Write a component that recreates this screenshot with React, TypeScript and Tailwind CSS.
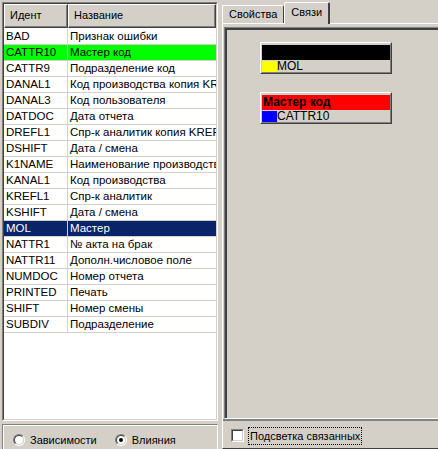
import React from 'react';

const rows: [string, string][] = [
  ['BAD', 'Признак ошибки'],
  ['CATTR10', 'Мастер код'],
  ['CATTR9', 'Подразделение код'],
  ['DANAL1', 'Код производства копия KREF'],
  ['DANAL3', 'Код пользователя'],
  ['DATDOC', 'Дата отчета'],
  ['DREFL1', 'Спр-к аналитик копия KREFL1'],
  ['DSHIFT', 'Дата / смена'],
  ['K1NAME', 'Наименование производства'],
  ['KANAL1', 'Код производства'],
  ['KREFL1', 'Спр-к аналитик'],
  ['KSHIFT', 'Дата / смена'],
  ['MOL', 'Мастер'],
  ['NATTR1', '№ акта на брак'],
  ['NATTR11', 'Дополн.числовое поле'],
  ['NUMDOC', 'Номер отчета'],
  ['PRINTED', 'Печать'],
  ['SHIFT', 'Номер смены'],
  ['SUBDIV', 'Подразделение'],
];

const rowStyle = (id: string) => {
  if (id === 'CATTR10') return 'bg-[#00ff00] text-black';
  if (id === 'MOL') return 'bg-[#0a246a] text-white';
  return 'bg-white text-black';
};

const Radio: React.FC<{ checked?: boolean; label: string }> = ({ checked, label }) => (
  <div className="flex items-center gap-[5px]">
    <span className="w-[12px] h-[12px] rounded-full border border-t-[#808080] border-l-[#808080] border-b-white border-r-white flex">
      <span className="flex-1 rounded-full border border-t-[#404040] border-l-[#404040] border-b-[#d4d0c8] border-r-[#d4d0c8] bg-white flex items-center justify-center">
        {checked && <span className="w-[4px] h-[4px] rounded-full bg-black" />}
      </span>
    </span>
    <span>{label}</span>
  </div>
);

const Node: React.FC<{ left: number; top: number; title: string; titleBg: string; sq: string; name: string }> = ({
  title,
  titleBg,
  sq,
  name,
  left,
  top,
}) => (
  <div
    className="absolute w-[132px] border border-t-white border-l-white border-b-[#404040] border-r-[#404040]"
    style={{ left, top }}
  >
    <div className="border border-t-[#d4d0c8] border-l-[#d4d0c8] border-b-[#808080] border-r-[#808080] bg-[#d4d0c8] pt-px">
      <div className={`h-[15px] ${titleBg} font-bold text-[12px] leading-[15px] pl-px`}>{title}</div>
      <div className="h-[12px] flex items-center">
        <span className={`w-[15px] h-[11px] ${sq}`} />
        <span className="leading-[12px] text-[12px]">{name}</span>
      </div>
    </div>
  </div>
);

export default function App() {
  return (
    <div className="w-[438px] h-[449px] bg-[#d4d0c8] flex overflow-hidden font-['Liberation_Sans',Arial,sans-serif] text-[11px] text-black">
      {/* левая панель */}
      <div className="w-[219px] shrink-0 flex flex-col pt-[2px] pl-[2px] pr-[1px]">
        <div className="h-[419px] border border-t-[#808080] border-l-[#808080] border-b-white border-r-white">
          <div className="h-full flex flex-col border border-t-[#404040] border-l-[#404040] border-b-[#d4d0c8] border-r-[#d4d0c8] bg-white">
            <div className="h-[24px] flex shrink-0 bg-[#d4d0c8]">
              <div className="w-[64px] border-t border-l border-white border-b border-r border-b-[#404040] border-r-[#404040] flex">
                <div className="flex-1 border-b border-r border-[#808080] pl-[5px] flex items-center">Идент</div>
              </div>
              <div className="flex-1 border-t border-l border-white border-b border-r border-b-[#404040] border-r-[#404040] flex">
                <div className="flex-1 border-b border-r border-[#808080] pl-[5px] flex items-center">Название</div>
              </div>
            </div>
            <div className="flex-1 overflow-hidden pt-px text-[11.5px]">
              {rows.map(([id, name]) => (
                <div key={id} className="flex h-[16px] border-b border-[#d4d0c8]">
                  <div className={`w-[64px] border-r border-[#d4d0c8] pl-[2px] leading-[15px] whitespace-nowrap overflow-hidden ${rowStyle(id)}`}>
                    {id}
                  </div>
                  <div className={`flex-1 pl-[2px] leading-[15px] whitespace-nowrap overflow-hidden ${rowStyle(id)}`}>
                    {name}
                  </div>
                </div>
              ))}
            </div>
          </div>
        </div>
        <div className="flex-1 mt-[3px] border-t border-l border-[#808080] border-r border-r-white flex">
          <div className="flex-1 border-t border-l border-white flex items-center gap-[18px] pl-[9px] pt-[5px]">
            <Radio label="Зависимости" />
            <Radio checked label="Влияния" />
          </div>
        </div>
      </div>

      {/* правая панель */}
      <div className="flex-1 flex flex-col pt-[2px] pl-[3px] min-w-0">
        <div className="h-[21px] flex items-end shrink-0">
          <div className="h-[18px] px-[6px] border-t border-l border-white border-r border-r-[#404040] rounded-t-[2px] flex items-center">
            Свойства
          </div>
          <div className="h-[22px] -mb-px relative z-10 px-[6px] bg-[#d4d0c8] border-t border-l border-white border-r-2 border-r-[#404040] rounded-t-[2px] flex items-center pb-[2px]">
            Связи
          </div>
        </div>
        <div className="flex-1 w-[240px] border-t border-l border-white border-b border-b-[#404040] flex flex-col">
          <div className="flex-1 ml-px mt-[3px] border-t border-l border-[#808080] border-b border-b-white flex">
            <div className="flex-1 relative border-t-2 border-l-2 border-[#404040]">
              <Node left={33} top={12} title="" titleBg="bg-black" sq="bg-[#ffff00]" name="MOL" />
              <Node left={33} top={62} title="Мастер код" titleBg="bg-[#ff0000]" sq="bg-[#0000ff]" name="CATTR10" />
            </div>
          </div>
          <div className="h-[29px] border-t-2 border-[#808080] flex items-center pl-[8px] pt-[2px] gap-[4px]">
            <span className="w-[13px] h-[13px] border border-t-[#808080] border-l-[#808080] border-b-white border-r-white flex">
              <span className="flex-1 bg-white border border-t-[#404040] border-l-[#404040] border-b-[#d4d0c8] border-r-[#d4d0c8]" />
            </span>
            <span className="border border-dotted border-black px-px leading-[16px]">Подсветка связанных</span>
          </div>
        </div>
      </div>
    </div>
  );
}
